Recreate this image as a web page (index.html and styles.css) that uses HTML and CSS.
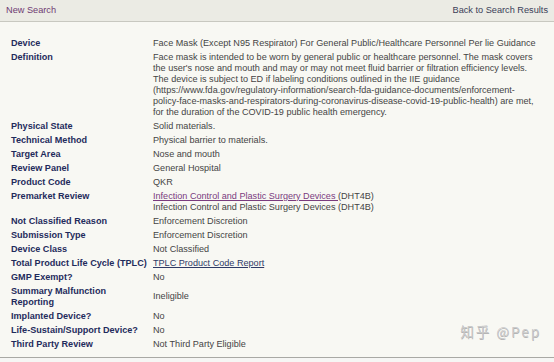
FILE: index.html
```html
<!DOCTYPE html>
<html>
<head>
<meta charset="utf-8">
<link rel="stylesheet" href="styles.css">
</head>
<body>
<div class="page">
  <div class="topbar">
    <a class="nav-link visited" href="#">New Search</a>
    <a class="nav-link back" href="#">Back to Search Results</a>
  </div>
  <div class="content">
    <table class="detail">
      <colgroup><col class="label-col"><col class="value-col"></colgroup>
      <tr><th>Device</th><td>Face Mask (Except N95 Respirator) For General Public/Healthcare Personnel Per lie Guidance</td></tr>
      <tr><th>Definition</th><td class="definition">Face mask is intended to be worn by general public or healthcare personnel. The mask covers<br>the user's nose and mouth and may or may not meet fluid barrier or filtration efficiency levels.<br>The device is subject to ED if labeling conditions outlined in the IIE guidance<br>(https://www.fda.gov/regulatory-information/search-fda-guidance-documents/enforcement-<br>policy-face-masks-and-respirators-during-coronavirus-disease-covid-19-public-health) are met,<br>for the duration of the COVID-19 public health emergency.</td></tr>
      <tr><th>Physical State</th><td>Solid materials.</td></tr>
      <tr><th>Technical Method</th><td>Physical barrier to materials.</td></tr>
      <tr><th>Target Area</th><td>Nose and mouth</td></tr>
      <tr><th>Review Panel</th><td>General Hospital</td></tr>
      <tr><th>Product Code</th><td>QKR</td></tr>
      <tr><th>Premarket Review</th><td><a class="visited" href="#">Infection Control and Plastic Surgery Devices </a>(DHT4B)<br>Infection Control and Plastic Surgery Devices (DHT4B)</td></tr>
      <tr><th>Not Classified Reason</th><td>Enforcement Discretion</td></tr>
      <tr><th>Submission Type</th><td>Enforcement Discretion</td></tr>
      <tr><th>Device Class</th><td>Not Classified</td></tr>
      <tr><th>Total Product Life Cycle (TPLC)</th><td><a class="report" href="#">TPLC Product Code Report</a></td></tr>
      <tr><th>GMP Exempt?</th><td>No</td></tr>
      <tr><th>Summary Malfunction<br>Reporting</th><td>Ineligible</td></tr>
      <tr><th>Implanted Device?</th><td>No</td></tr>
      <tr><th>Life-Sustain/Support Device?</th><td>No</td></tr>
      <tr><th>Third Party Review</th><td>Not Third Party Eligible</td></tr>
    </table>
  </div>
  <div class="watermark">知乎 @Pep</div>
</div>
</body>
</html>
```

FILE: styles.css
```css
html, body {
  margin: 0;
  padding: 0;
  background: #f6f6f4;
}
.page {
  position: relative;
  width: 554px;
  height: 362px;
  overflow: hidden;
  font-family: "Liberation Sans", Arial, sans-serif;
  font-size: 9.1px;
  line-height: 11px;
  color: #444;
}
.topbar {
  height: 21px;
  display: flex;
  justify-content: space-between;
  align-items: center;
  padding: 0 6px 0 6px;
  background: #ebebe4;
  border-bottom: 1px solid #c8c8c0;
}
.nav-link {
  text-decoration: none;
  font-size: 9.2px;
}
.nav-link.visited { color: #6e3a72; }
.nav-link.back { color: #3a4058; }
.content {
  background: #f8f8f3;
  padding: 14px 0 0 11px;
  height: 336px;
  box-sizing: border-box;
  border-bottom: 1px solid #a9a9a4;
}
.detail {
  table-layout: fixed;
  width: 534px;
  border-collapse: collapse;
  border-spacing: 0;
}
.label-col { width: 142px; }
.value-col { width: 392px; }
.detail th {
  padding: 1.5px 0;
  text-align: left;
  vertical-align: top;
  font-weight: bold;
  color: #1f2b5c;
}
.detail td {
  padding: 1.5px 0;
  vertical-align: middle;
  color: #444;
}
.definition {
  white-space: nowrap;
}
.detail a.visited {
  color: #7a3b7e;
  text-decoration: underline;
}
.detail a.report {
  color: #2e3a66;
  text-decoration: underline;
}
.watermark {
  position: absolute;
  right: 13px;
  top: 322px;
  font-family: "Noto Sans CJK SC", "Liberation Sans", sans-serif;
  font-size: 13.5px;
  letter-spacing: 2px;
  line-height: 18px;
  color: #cacaca;
  text-shadow: 0.5px 0.5px 0 #b5b5b5, -0.5px -0.5px 0 #ffffff;
}
```
